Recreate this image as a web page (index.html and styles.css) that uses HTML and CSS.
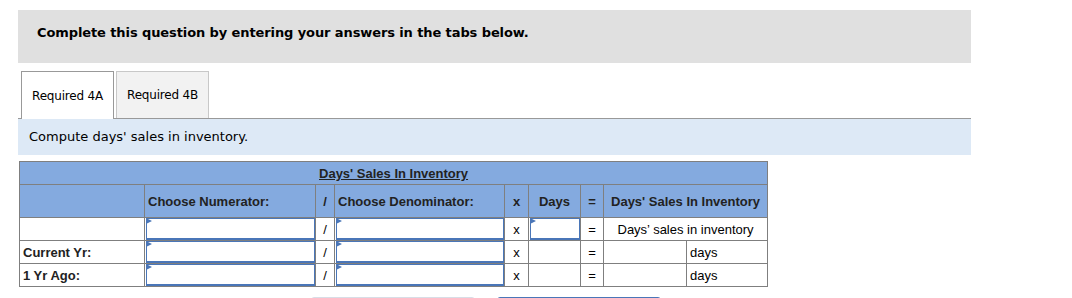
FILE: index.html
```html
<!DOCTYPE html>
<html lang="en">
<head>
  <meta charset="UTF-8" />
  <title>Days' Sales In Inventory</title>
  <link rel="stylesheet" href="styles.css">
</head>
<body>

  <div class="page">

    <!-- Question banner -->
    <div class="banner">
      <p>Complete this question by entering your answers in the tabs below.</p>
    </div>

    <!-- Tabs -->
    <div class="tabs">
      <button class="tab active">Required 4A</button>
      <button class="tab">Required 4B</button>
    </div>

    <div class="instructions">Compute days' sales in inventory.</div>

    <!-- Worksheet -->
    <table class="sheet">
      <colgroup>
        <col style="width:125px">
        <col style="width:171px">
        <col style="width:19px">
        <col style="width:170px">
        <col style="width:24px">
        <col style="width:52px">
        <col style="width:23px">
        <col style="width:83px">
        <col style="width:81px">
      </colgroup>
      <tr class="title-row">
        <th colspan="9"><u>Days' Sales In Inventory</u></th>
      </tr>
      <tr class="head-row">
        <th></th>
        <th class="left">Choose Numerator:</th>
        <th class="op">/</th>
        <th class="left">Choose Denominator:</th>
        <th class="op">x</th>
        <th>Days</th>
        <th class="op">=</th>
        <th colspan="2">Days' Sales In Inventory</th>
      </tr>
      <tr>
        <td></td>
        <td class="field"><div class="input"></div></td>
        <td class="op">/</td>
        <td class="field"><div class="input"></div></td>
        <td class="op">x</td>
        <td class="field"><div class="input"></div></td>
        <td class="op">=</td>
        <td colspan="2" class="center">Days’ sales in inventory</td>
      </tr>
      <tr>
        <td class="label">Current Yr:</td>
        <td class="field"><div class="input"></div></td>
        <td class="op">/</td>
        <td class="field"><div class="input"></div></td>
        <td class="op">x</td>
        <td></td>
        <td class="op">=</td>
        <td></td>
        <td>days</td>
      </tr>
      <tr>
        <td class="label">1 Yr Ago:</td>
        <td class="field"><div class="input"></div></td>
        <td class="op">/</td>
        <td class="field"><div class="input"></div></td>
        <td class="op">x</td>
        <td></td>
        <td class="op">=</td>
        <td></td>
        <td>days</td>
      </tr>
    </table>

    <!-- Navigation buttons, only their top edge shows in the window -->
    <div class="nav">
      <div class="nav-btn prev"></div>
      <div class="nav-btn next"></div>
    </div>

  </div>

</body>
</html>
```

FILE: styles.css
```css
* {
  margin: 0;
  padding: 0;
  box-sizing: border-box;
}

body {
  font-family: "DejaVu Sans", Verdana, sans-serif;
  background-color: white;
  color: #000;
}

.page {
  width: 971px;
  padding: 10px 0 0 18px;
}

.banner {
  background-color: #e0e0e0;
  height: 53px;
  padding: 15px 19px 0;
}

.banner p {
  font-size: 13px;
  font-weight: bold;
  letter-spacing: -0.1px;
}

.tabs {
  display: flex;
  gap: 2px;
  margin-top: 8px;
  padding-left: 3px;
  border-bottom: 1px solid #999;
}

.tab {
  width: 93px;
  height: 47px;
  font-family: "DejaVu Sans", Verdana, sans-serif;
  font-size: 12px;
  letter-spacing: -0.2px;
  color: #000;
  background-color: #f2f2f2;
  border: 1px solid #c8c8c8;
  border-bottom: none;
}

.tab.active {
  background-color: #fff;
  border-color: #999;
  margin-bottom: -1px;
  height: 48px;
}

.instructions {
  background-color: #dde9f6;
  height: 36px;
  padding: 10px 11px 0;
  font-size: 13px;
}

.sheet {
  margin-top: 6px;
  margin-left: 1px;
  border-collapse: collapse;
  table-layout: fixed;
  width: 748px;
  font-family: "Liberation Sans", Arial, sans-serif;
  font-size: 13px;
  border: 1px solid #7f7f7f;
}

.sheet th,
.sheet td {
  border: 1px solid #7f7f7f;
  padding: 0 3px;
  height: 23px;
  white-space: nowrap;
  overflow: hidden;
}

.sheet th {
  background-color: #84aadf;
  font-weight: bold;
  color: #222;
}

.title-row th {
  height: 23px;
  padding-top: 4px;
  vertical-align: top;
}

.head-row th {
  height: 33px;
}

.sheet .left {
  text-align: left;
}

.sheet .op {
  text-align: center;
  padding: 0;
}

.sheet .center {
  text-align: center;
}

.sheet .label {
  font-weight: bold;
  color: #222;
}

.sheet td.field {
  padding: 0;
}

.input {
  position: relative;
  height: 22px;
  margin-left: 1px;
  border: 1px solid #4a76b8;
  border-bottom-width: 2px;
  background: #fff;
}

/* dropdown marker in the corner */
.input::before {
  content: "";
  position: absolute;
  top: -1px;
  left: -1px;
  border-top: 3px solid transparent;
  border-bottom: 3px solid transparent;
  border-left: 6px solid #4a76b8;
}

.nav {
  display: flex;
  gap: 22px;
  margin-top: 10px;
  padding-left: 293px;
}

.nav-btn {
  width: 164px;
  height: 36px;
  border-radius: 3px;
  background-color: #fff;
}

.nav-btn.prev {
  border: 1px solid #d8dde6;
}

.nav-btn.next {
  border: 1px solid #4a76b8;
}
```
